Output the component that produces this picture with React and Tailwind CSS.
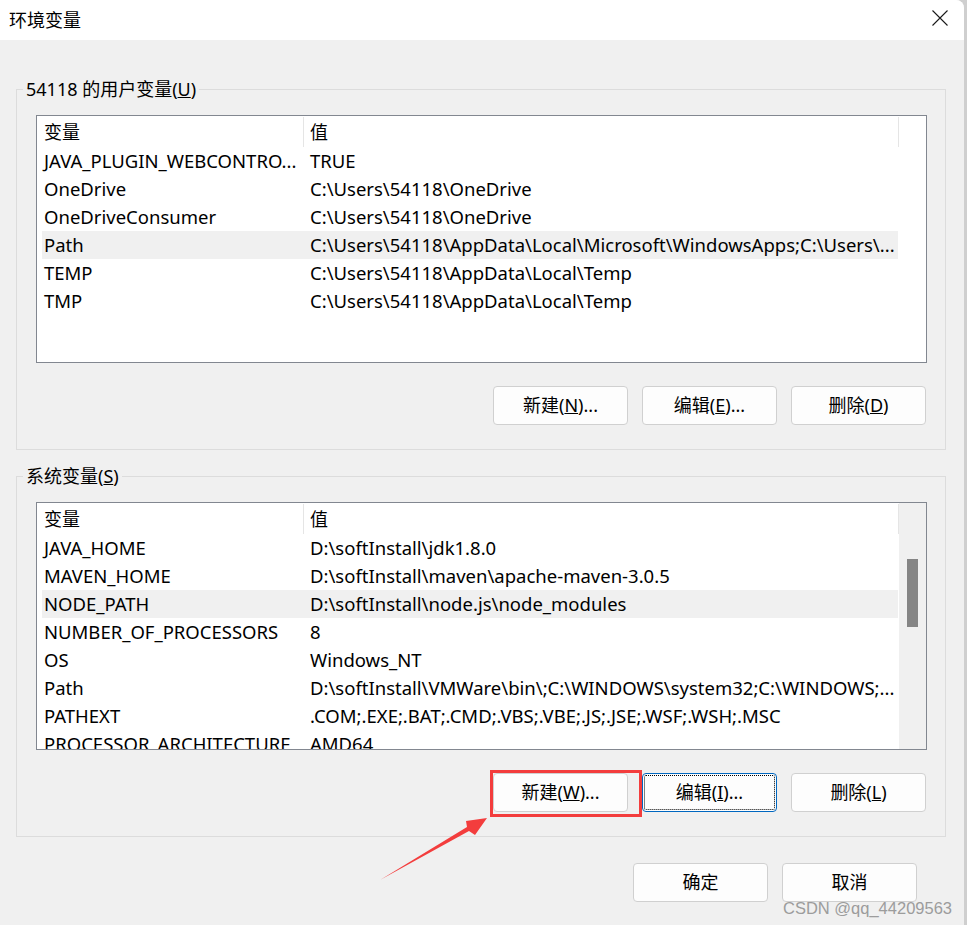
import React from "react";

const FONT = { fontFamily: '"Noto Sans", "Noto Sans CJK SC", sans-serif' };

const USER_VARS = [
  ["JAVA_PLUGIN_WEBCONTRO...", "TRUE"],
  ["OneDrive", "C:\\Users\\54118\\OneDrive"],
  ["OneDriveConsumer", "C:\\Users\\54118\\OneDrive"],
  ["Path", "C:\\Users\\54118\\AppData\\Local\\Microsoft\\WindowsApps;C:\\Users\\..."],
  ["TEMP", "C:\\Users\\54118\\AppData\\Local\\Temp"],
  ["TMP", "C:\\Users\\54118\\AppData\\Local\\Temp"]
];

const SYS_VARS = [
  ["JAVA_HOME", "D:\\softInstall\\jdk1.8.0"],
  ["MAVEN_HOME", "D:\\softInstall\\maven\\apache-maven-3.0.5"],
  ["NODE_PATH", "D:\\softInstall\\node.js\\node_modules"],
  ["NUMBER_OF_PROCESSORS", "8"],
  ["OS", "Windows_NT"],
  ["Path", "D:\\softInstall\\VMWare\\bin\\;C:\\WINDOWS\\system32;C:\\WINDOWS;..."],
  ["PATHEXT", ".COM;.EXE;.BAT;.CMD;.VBS;.VBE;.JS;.JSE;.WSF;.WSH;.MSC"],
  ["PROCESSOR_ARCHITECTURE", "AMD64"]
];

function VarList({ rows, selected, scroll }) {
  return (
    <div className="mt-[14px] flex h-[248px] overflow-hidden border border-[#828790] bg-white text-[18.5px]">
      <div className="w-[862px] pl-[5px] pt-[1px]">
        <div className="flex h-[30px] w-[857px] items-center border-r border-[#e5e5e5]">
          <div className="w-[261px] pl-[2px] text-[18px] leading-[28px]">变量</div>
          <div className="flex h-full flex-1 items-center border-l border-[#e5e5e5] pl-[6px] text-[18px]">值</div>
        </div>
        {rows.map((r, i) => (
          <div
            key={i}
            className={
              "flex h-[28px] w-[856px] items-center leading-[28px] " +
              (i === selected ? "bg-[#f0f0f0]" : "")
            }
          >
            <div className="w-[261px] overflow-hidden whitespace-nowrap pl-[2px]">{r[0]}</div>
            <div className="flex-1 overflow-hidden whitespace-nowrap pl-[7px]">{r[1]}</div>
          </div>
        ))}
      </div>
      {scroll ? (
        <div className="w-[27px] bg-[#f0f0f0] pt-[56px]">
          <div className="mx-auto h-[68px] w-[11px] bg-[#858585]" />
        </div>
      ) : (
        <div className="w-[27px]" />
      )}
    </div>
  );
}

function Btn({ children, focused }) {
  return (
    <button
      className={
        "h-[39px] w-[135px] rounded-[4px] border bg-[#fdfdfd] text-[18px] text-black " +
        (focused
          ? "border-[#0067c0] outline-1 outline-dotted outline-black outline-offset-[-3px]"
          : "border-[#d0d0d0]")
      }
    >
      {children}
    </button>
  );
}

function Group({ title, mt, children }) {
  return (
    <fieldset className={"border border-[#dcdcdc] pb-[24px] pl-[19px] pr-[18px] " + mt}>
      <legend className="ml-[-13px] px-[3px] text-[18px] leading-[24px]">{title}</legend>
      {children}
    </fieldset>
  );
}

export default function App() {
  return (
    <div className="flex h-[925px] w-[967px] bg-[#cfcfcf] text-[18px] text-black" style={FONT}>
      <div className="relative flex w-[964px] flex-col overflow-hidden rounded-tr-[8px] bg-[#f0f0f0]">
        <div className="flex h-[40px] items-center justify-between bg-white pl-[9px] pr-[16px]">
          <span className="leading-[24px]">环境变量</span>
          <svg width="16" height="16" viewBox="0 0 16 16" className="mb-[4px]">
            <path d="M0.5 0.5 L15.5 15.5 M15.5 0.5 L0.5 15.5" stroke="#1a1a1a" strokeWidth="1.1" fill="none" />
          </svg>
        </div>

        <div className="pl-[16px] pr-[18px]">
          <Group title={<>54118 的用户变量(<u>U</u>)</>} mt="mt-[37px]">
            <VarList rows={USER_VARS} selected={3} />
            <div className="mt-[23px] flex justify-end gap-[14px] pr-[1px]">
              <Btn>新建(<u>N</u>)...</Btn>
              <Btn>编辑(<u>E</u>)...</Btn>
              <Btn>删除(<u>D</u>)</Btn>
            </div>
          </Group>

          <Group title={<>系统变量(<u>S</u>)</>} mt="mt-[14px]">
            <VarList rows={SYS_VARS} selected={2} scroll />
            <div className="mt-[23px] flex justify-end gap-[14px] pr-[1px]">
              <Btn>新建(<u>W</u>)...</Btn>
              <Btn focused>编辑(<u>I</u>)...</Btn>
              <Btn>删除(<u>L</u>)</Btn>
            </div>
          </Group>
        </div>

        <div className="mt-[26px] flex justify-end gap-[14px] pr-[47px]">
          <Btn>确定</Btn>
          <Btn>取消</Btn>
        </div>

        {/* annotation overlays */}
        <div className="absolute left-[490px] top-[770px] h-[47px] w-[152px] border-[3px] border-[#f33d3d]" />
        <svg className="absolute left-0 top-0" width="964" height="925" style={{ pointerEvents: "none" }}>
          <polygon
            points="380,880 469,831 475,835 487,818 466,821 467,827"
            fill="#f33d3d"
          />
        </svg>
        <div
          className="absolute left-[783px] top-[897px] text-[16.5px] leading-[22px] text-[#9c9c9c]"
          style={{ fontFamily: '"Liberation Sans", Arial, sans-serif' }}
        >
          CSDN @qq_44209563
        </div>
      </div>
      <div className="w-[3px]" />
    </div>
  );
}
